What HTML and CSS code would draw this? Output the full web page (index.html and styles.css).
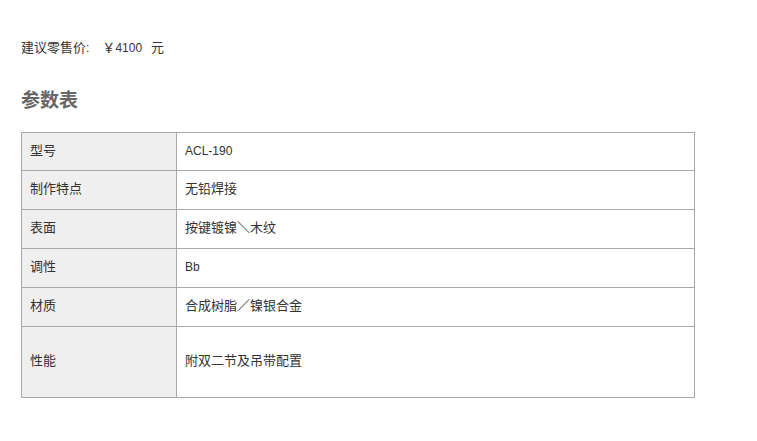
FILE: index.html
```html
<!DOCTYPE html>
<html>
<head>
<meta charset="utf-8">
<link rel="stylesheet" href="styles.css">
</head>
<body>
<div class="page">
  <p class="price"><span class="cjk">建议零售价</span>:<span class="amount"><span class="cjk">￥</span>4100</span><span class="cjk unit">元</span></p>
  <h2 class="title">参数表</h2>
  <table class="spec">
    <tr><td class="key cjk">型号</td><td class="val">ACL-190</td></tr>
    <tr><td class="key cjk">制作特点</td><td class="val cjk">无铅焊接</td></tr>
    <tr><td class="key cjk">表面</td><td class="val cjk">按键镀镍＼木纹</td></tr>
    <tr><td class="key cjk">调性</td><td class="val">Bb</td></tr>
    <tr><td class="key cjk">材质</td><td class="val cjk">合成树脂／镍银合金</td></tr>
    <tr class="tall"><td class="key cjk">性能</td><td class="val cjk">附双二节及吊带配置</td></tr>
  </table>
</div>
</body>
</html>
```

FILE: styles.css
```css
html, body {
  margin: 0;
  padding: 0;
  background: #fff;
}
.page {
  padding: 39px 0 0 21px;
  font-family: "Liberation Sans", Arial, "Noto Sans CJK SC", sans-serif;
  font-size: 12px;
  color: #333;
}
.cjk {
  font-size: 13px;
}
.price {
  margin: 0;
  line-height: 18px;
  height: 18px;
}
.amount {
  margin-left: 13px;
}
.unit {
  margin-left: 9px;
}
.title {
  margin: 32px 0 0 0;
  font-size: 19px;
  line-height: 24px;
  font-weight: bold;
  color: #666;
}
.spec {
  margin-top: 19px;
  border-collapse: collapse;
  width: 674px;
  border: 1px solid #a9a9a9;
}
.spec td {
  border: 1px solid #a9a9a9;
  height: 39px;
  padding: 0 8px 2px 8px;
  line-height: 16px;
  vertical-align: middle;
  box-sizing: border-box;
}
.spec td.val {
  padding-left: 8px;
}
.spec tr:first-child td {
  height: 38px;
}
.spec td.key {
  width: 155px;
  background: #efefef;
}
.spec tr.tall td {
  height: 71px;
}
```
